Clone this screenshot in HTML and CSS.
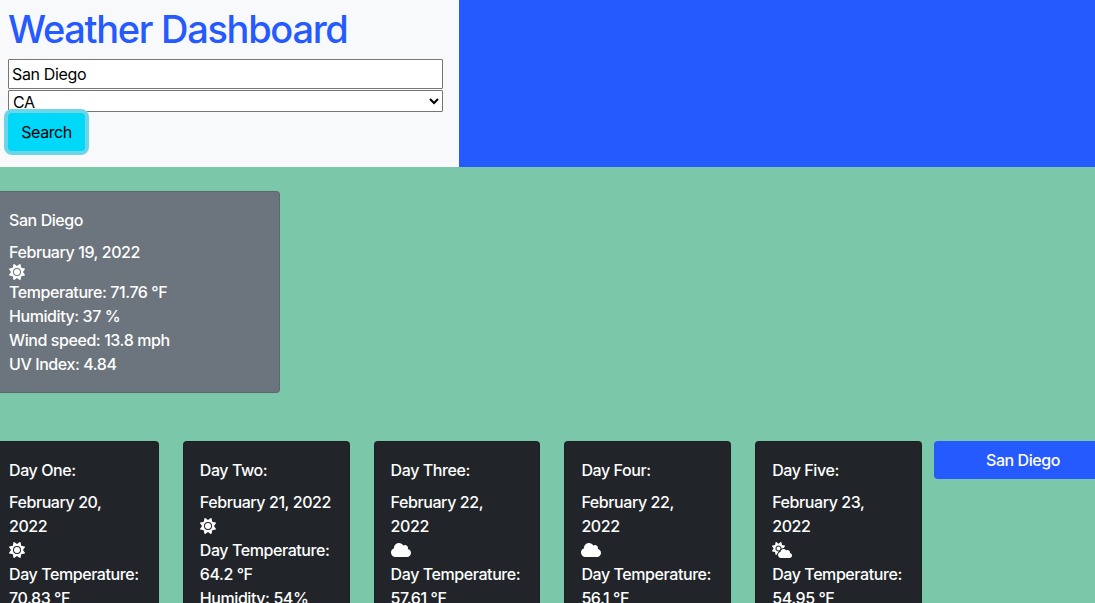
FILE: index.html
```html
<!DOCTYPE html>
<html lang="en">
<head>
<meta charset="utf-8">
<title>Weather Dashboard</title>
<link rel="stylesheet" href="styles.css">
</head>
<body>
<svg class="sprite" aria-hidden="true">
  <symbol id="sun" viewBox="0 0 512 512"><path d="M361.5 1.2c5 2.1 8.6 6.6 9.6 11.9L391 121l107.9 19.8c5.3 1 9.8 4.6 11.9 9.6s1.5 10.7-1.6 15.2L446.9 256l62.3 90.3c3.1 4.5 3.7 10.2 1.6 15.2s-6.6 8.6-11.9 9.6L391 391 371.1 498.9c-1 5.3-4.6 9.8-9.6 11.9s-10.7 1.5-15.2-1.6L256 446.9l-90.3 62.3c-4.5 3.1-10.2 3.7-15.2 1.6s-8.6-6.6-9.6-11.9L121 391 13.1 371.1c-5.3-1-9.8-4.6-11.9-9.6s-1.5-10.7 1.6-15.2L65.1 256 2.8 165.7c-3.1-4.5-3.7-10.2-1.6-15.2s6.6-8.6 11.9-9.6L121 121 140.9 13.1c1-5.3 4.6-9.8 9.6-11.9s10.7-1.5 15.2 1.6L256 65.1 346.3 2.8c4.5-3.1 10.2-3.7 15.2-1.6zM160 256a96 96 0 1 1 192 0 96 96 0 1 1 -192 0zm224 0a128 128 0 1 0 -256 0 128 128 0 1 0 256 0z"/></symbol>
  <symbol id="cloud" viewBox="0 0 640 512"><path d="M0 336c0 79.5 64.5 144 144 144H512c70.7 0 128-57.3 128-128c0-61.9-44-113.6-102.4-125.4c4.1-10.7 6.4-22.4 6.4-34.6c0-53-43-96-96-96c-19.7 0-38.1 6-53.3 16.2C367 64.2 315.3 32 256 32C167.6 32 96 103.6 96 192c0 2.7 .1 5.4 .2 8.1C40.2 219.8 0 273.2 0 336z"/></symbol>
  <symbol id="cloud-sun" viewBox="0 0 640 512"><path d="M294.2 1.2c5.1 2.1 8.7 6.7 9.6 12.1l14.1 84.7 84.7 14.1c5.4 .9 10 4.5 12.1 9.6s1.5 10.9-1.6 15.4l-38.5 55c-2.2-.1-4.4-.2-6.7-.2c-23.3 0-45.1 6.2-64 17.1l0-1.1c0-53-43-96-96-96s-96 43-96 96s43 96 96 96c8.1 0 15.9-1 23.4-2.9c-36.6 18.1-63.3 53.1-69.8 94.9l-24.4 17c-4.5 3.2-10.3 3.8-15.4 1.6s-8.7-6.7-9.6-12.1L98.1 317.9 13.4 303.8c-5.4-.9-10-4.5-12.1-9.6s-1.5-10.9 1.6-15.4L52.5 208 2.9 137.2c-3.2-4.5-3.8-10.3-1.6-15.4s6.7-8.7 12.1-9.6L98.1 98.1l14.1-84.7c.9-5.4 4.5-10 9.6-12.1s10.9-1.5 15.4 1.6L208 52.5 278.8 2.9c4.5-3.2 10.3-3.8 15.4-1.6zM144 208a64 64 0 1 1 128 0 64 64 0 1 1 -128 0zM639.9 431.9c0 44.2-35.8 80-80 80H288c-53 0-96-43-96-96c0-47.6 34.6-87 80-94.6l0-1.3c0-53 43-96 96-96c34.9 0 65.4 18.6 82.2 46.4c13-9.1 28.8-14.4 45.8-14.4c44.2 0 80 35.8 80 80c0 5.9-.6 11.7-1.9 17.2c37.4 6.7 65.8 39.4 65.8 78.7z"/></symbol>
</svg>
<header class="header">
  <form class="search">
    <h1 class="title">Weather Dashboard</h1>
    <input class="city" type="text" value="San Diego" aria-label="City">
    <select class="state" aria-label="State"><option>CA</option></select>
    <button class="submit" type="button">Search</button>
  </form>
</header>
<main>
  <section class="card current">
    <h5 class="card-title">San Diego</h5>
    <p>February 19, 2022</p>
    <div class="icon-block"><svg class="icon"><use href="#sun"/></svg></div>
    <p>Temperature: 71.76 °F</p>
    <p>Humidity: 37 %</p>
    <p>Wind speed: 13.8 mph</p>
    <p>UV Index: 4.84</p>
  </section>
  <div class="forecast">
    <section class="card day">
      <h5 class="card-title">Day One:</h5>
      <p>February 20,<br>2022</p>
      <div class="icon-line"><svg class="icon"><use href="#sun"/></svg></div>
      <p>Day Temperature:<br>70.83 °F</p>
    </section>
    <section class="card day">
      <h5 class="card-title">Day Two:</h5>
      <p>February 21, 2022</p>
      <div class="icon-line"><svg class="icon"><use href="#sun"/></svg></div>
      <p>Day Temperature:<br>64.2 °F</p>
      <p>Humidity: 54%</p>
    </section>
    <section class="card day">
      <h5 class="card-title">Day Three:</h5>
      <p>February 22,<br>2022</p>
      <div class="icon-line"><svg class="icon wide"><use href="#cloud"/></svg></div>
      <p>Day Temperature:<br>57.61 °F</p>
    </section>
    <section class="card day">
      <h5 class="card-title">Day Four:</h5>
      <p>February 22,<br>2022</p>
      <div class="icon-line"><svg class="icon wide"><use href="#cloud"/></svg></div>
      <p>Day Temperature:<br>56.1 °F</p>
    </section>
    <section class="card day">
      <h5 class="card-title">Day Five:</h5>
      <p>February 23,<br>2022</p>
      <div class="icon-line"><svg class="icon wide"><use href="#cloud-sun"/></svg></div>
      <p>Day Temperature:<br>54.95 °F</p>
    </section>
    <button class="history" type="button">San Diego</button>
  </div>
</main>
</body>
</html>
```
FILE: styles.css
```css
* { box-sizing: border-box; }

body {
  height: 603px;
  margin: 0;
  overflow: hidden;
  background: #7ac7a9;
  color: #fff;
  font: 400 16px/24px Inter, "Liberation Sans", sans-serif;
  letter-spacing: -0.35px;
}

h1, h5, p { margin: 0; }

.sprite { display: none; }

.header {
  height: 167px;
  background: #255aff;
}

.search {
  display: flex;
  flex-direction: column;
  align-items: flex-start;
  width: 459px;
  height: 167px;
  padding: 5px 16px 0 8px;
  background: #f8f9fb;
}

.title {
  margin-bottom: 6px;
  color: #255aff;
  font-size: 38px;
  font-weight: 500;
  line-height: 48px;
  letter-spacing: -1.3px;
  white-space: nowrap;
}

.city, .state {
  width: 100%;
  border: 1px solid #767676;
  border-radius: 1px;
  background: #fff;
  color: #000;
  font: inherit;
  letter-spacing: inherit;
}

.city {
  height: 30px;
  margin-bottom: 1px;
  padding: 1px 3px;
}

.state {
  height: 22px;
  margin-bottom: 1px;
  padding: 0 0 2px;
}

.submit {
  width: 77px;
  height: 38px;
  padding: 0;
  border: 0;
  border-radius: 4px;
  background: #00d8fa;
  box-shadow: 0 0 0 4px #6dd6e6;
  color: #000;
  font: inherit;
  letter-spacing: -0.45px;
}

.card {
  padding: 16px;
  border: 1px solid rgba(0, 0, 0, 0.125);
  border-radius: 4px;
  font-weight: 500;
  letter-spacing: -0.42px;
}

.card-title {
  margin-bottom: 8px;
  font-size: 16px;
  font-weight: 500;
  line-height: 24px;
}

.current {
  width: 288px;
  height: 202px;
  margin: 24px 0 48px -8px;
  background: #6c757d;
}

.forecast {
  display: grid;
  grid-template-columns: repeat(5, 166.8px) 178px;
  column-gap: 24px;
  width: 1132px;
  margin-left: -8px;
}

.day {
  height: 162px;
  background: #212529;
  border-bottom: 0;
  border-radius: 4px 4px 0 0;
  white-space: nowrap;
}

.icon {
  display: block;
  width: 16px;
  height: 16px;
  fill: #fff;
}

.wide { width: 20px; }

.icon-line {
  display: flex;
  align-items: center;
  height: 24px;
}

.history {
  width: 178px;
  height: 38px;
  margin-left: -12px;
  padding: 0;
  border: 0;
  border-radius: 4px;
  background: #255aff;
  color: #fff;
  font: inherit;
  font-weight: 500;
  letter-spacing: -0.45px;
}
```
